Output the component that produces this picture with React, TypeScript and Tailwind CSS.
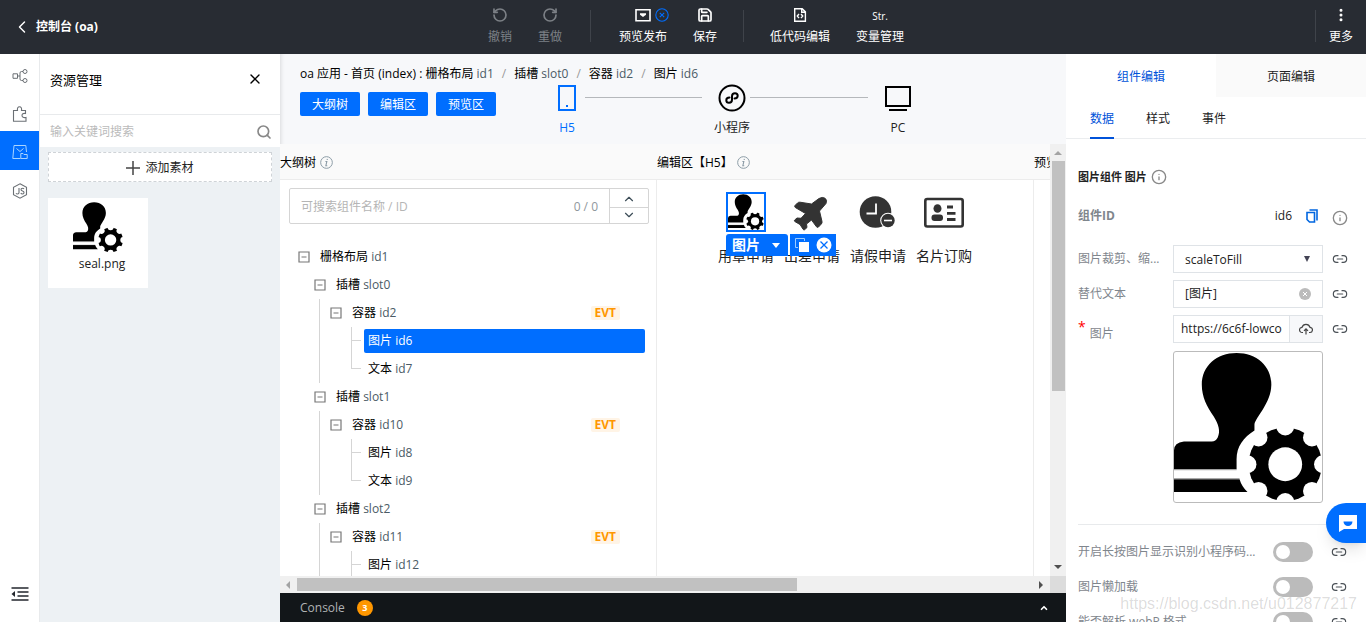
import React, { useState } from 'react';
import { ChevronDown, ChevronLeft, ChevronUp, EllipsisVertical, Info, Link2, RotateCcw, RotateCw, Save, Search, X } from 'lucide-react';

interface TreeItem {
  name: string;
  id: string;
  evt?: boolean;
  children?: TreeItem[];
}

const slots: TreeItem[] = [
  {
    name: '插槽',
    id: 'slot0',
    children: [{ name: '容器', id: 'id2', evt: true, children: [{ name: '图片', id: 'id6' }, { name: '文本', id: 'id7' }] }],
  },
  {
    name: '插槽',
    id: 'slot1',
    children: [{ name: '容器', id: 'id10', evt: true, children: [{ name: '图片', id: 'id8' }, { name: '文本', id: 'id9' }] }],
  },
  {
    name: '插槽',
    id: 'slot2',
    children: [{ name: '容器', id: 'id11', evt: true, children: [{ name: '图片', id: 'id12' }, { name: '文本', id: 'id13' }] }],
  },
];

const notches = [0, 45, 90, 135, 180, 225, 270, 315];

const SealImage: React.FC<{ className: string }> = ({ className }) => (
  <svg viewBox="0 0 149 149" className={className} role="img" aria-label="seal">
    <circle cx="112" cy="113" r="37" />
    {notches.map((deg) => (
      <circle key={deg} cx="150" cy="113" r="9" fill="#fff" transform={`rotate(${deg} 112 113)`} />
    ))}
    <circle cx="112" cy="113" r="17" fill="#fff" />
    <path d="M63 1C43 1 28 14 28 33C28 45 33 55 40 65C45 73 47 80 44 86Q42 90 38 90H10Q0 91 0 99V118H63V108C63 95 70 86 81 79V73C82 66 98 51 98 33C98 14 83 1 63 1Z" />
    <path d="M0 128H66Q68 135 74 141H0Z" />
    <path d="M0 118.500H63M0 127.500H66" stroke="#999" />
  </svg>
);

const HintIcon = () => (
  <svg viewBox="0 0 12 12" className="size-[13px] shrink-0" fill="none" stroke="#8a9aa5">
    <circle cx="6" cy="6" r="5.4" strokeWidth="0.9" />
    <path d="M6.8 2.7l-.2 1M5 5.1h1.3L5.4 9h1.3" strokeWidth="1" />
  </svg>
);

const CollapseIcon = () => (
  <svg viewBox="0 0 12 12" className="size-3 shrink-0" fill="none" stroke="#777">
    <path d="M1 1h10v10H1zM3.5 6h5" strokeWidth="1.2" />
  </svg>
);

const PreviewIcon = () => (
  <svg viewBox="0 0 16 16" className="size-4" fill="none" stroke="#fff">
    <path d="M1 2.7h14v11H1z" strokeWidth="1.6" />
    <path d="M5 6.2h6v1.500L8 10 5 7.700z" fill="#fff" stroke="none" />
  </svg>
);

const CodeFileIcon = () => (
  <svg viewBox="0 0 16 16" className="size-4" fill="none" stroke="#fff" strokeWidth="1.4">
    <path d="M2.7 1.7h7.5l3.2 3.2v9.4H2.7zM9.7 2v3.3h3.5M7 7L5.3 9 7 11M9 7l1.7 2L9 11" />
  </svg>
);

interface ToolProps {
  label: string;
  muted?: boolean;
  children: React.ReactNode;
}

const Tool: React.FC<ToolProps> = ({ label, muted, children }) => (
  <button type="button" className={`flex shrink-0 flex-col items-center gap-[6px] whitespace-nowrap leading-4 ${muted ? 'text-[#7c8086]' : 'text-white'}`}>
    <span className="relative flex h-4 items-center">{children}</span>
    {label}
  </button>
);

const Header = () => (
  <header className="flex h-[54px] shrink-0 items-start bg-[#282c33] pr-[13px] text-white">
    <button type="button" className="flex h-[54px] w-[488px] shrink-0 items-center gap-1 pl-3 font-bold">
      <ChevronLeft className="size-5" strokeWidth={1.75} />
      控制台 (oa)
    </button>
    <nav className="flex gap-[26px] pt-[7px]">
      <Tool label="撤销" muted><RotateCcw className="size-4" strokeWidth={2.5} /></Tool>
      <Tool label="重做" muted><RotateCw className="size-4" strokeWidth={2.5} /></Tool>
      <span className="mx-[2px] mt-[3px] h-8 w-px bg-[#3f434a]" />
      <Tool label="预览发布">
        <PreviewIcon />
        <svg viewBox="0 0 14 14" className="absolute left-5 top-px size-[14px]" fill="none" stroke="#006eff" strokeWidth="1.1">
          <circle cx="7" cy="7" r="6.2" />
          <path d="M4.8 4.8l4.4 4.4M9.2 4.8L4.8 9.2" />
        </svg>
      </Tool>
      <Tool label="保存"><Save className="size-4" strokeWidth={2.5} /></Tool>
      <span className="mt-[3px] h-8 w-px bg-[#3f434a]" />
      <Tool label="低代码编辑"><CodeFileIcon /></Tool>
      <Tool label="变量管理"><span className="pt-[2px] text-[10px]">Str.</span></Tool>
    </nav>
    <div className="ml-auto flex gap-[13px] pt-[7px]">
      <span className="mt-[3px] h-8 w-px bg-[#3f434a]" />
      <Tool label="更多"><EllipsisVertical className="size-4" strokeWidth={2.5} /></Tool>
    </div>
  </header>
);

const Rail = () => (
  <nav className="flex w-10 shrink-0 flex-col border-r border-[#e8eaec] bg-white pt-px text-[#6b7075]">
    <button type="button" aria-label="流程" className="flex h-[38px] items-center justify-center pt-[3px]">
      <svg viewBox="0 0 16 16" className="size-4" fill="none" stroke="currentColor">
        <path d="M1 5.8h4.5v4.5H1zM5.5 8H8M11 3.5H9.5Q8 3.5 8 5v6q0 1.500 1.500 1.500H11" />
        <circle cx="13" cy="3.5" r="2" />
        <circle cx="13" cy="12.500" r="2" />
      </svg>
    </button>
    <button type="button" aria-label="组件" className="flex h-[38px] items-center justify-center pt-[3px]">
      <svg viewBox="0 0 16 16" className="size-4" fill="none" stroke="currentColor" strokeWidth="1.1">
        <path d="M1.500 4.500H5.500C5 2 6 .8 7.500 .8S10 2 9.500 4.500H13.500V7.500C11 7 10 8 10 9.500S11.500 12 14 11.500V15.300H1.500Z" />
      </svg>
    </button>
    <button type="button" aria-label="资源" className="flex h-[39px] items-center justify-center bg-[#006eff] pt-[3px] text-[#a9d4ff]">
      <svg viewBox="0 0 16 16" className="size-4" fill="none" stroke="currentColor">
        <path d="M8.500 14.500H.8L2 1.500H13.800L14.500 8M4.500 4.500L8 7.500 11.500 4.500M8.800 9.500H11L12 10.500H15.200V14.500H8.800Z" />
      </svg>
    </button>
    <button type="button" aria-label="脚本" className="flex h-[38px] items-center justify-center pt-[3px]">
      <svg viewBox="0 0 16 16" className="size-4" fill="none" stroke="currentColor" strokeWidth="1.1">
        <path d="M8 .8L14.500 4.300V11.700L8 15.200 1.500 11.700V4.300Z" />
        <path d="M7 5V9.500Q7 11 5.500 11 4.500 11 4 10.200M12 6Q11.500 5.200 10.500 5.200 9 5.200 9 6.500 9 7.600 10.500 8 12 8.400 12 9.600 12 11 10.500 11 9.300 11 8.800 10" />
      </svg>
    </button>
    <button type="button" aria-label="收起" className="mt-auto mb-2 flex h-10 items-center justify-center text-[#23272e]">
      <svg viewBox="0 0 18 14" className="h-[14px] w-[18px]" fill="none" stroke="currentColor" strokeWidth="1.5">
        <path d="M.5 1H17.500M6.500 5H17.500M6.500 9H17.500M.5 13H17.500" />
        <path d="M4 4v6L.5 7z" fill="currentColor" stroke="none" />
      </svg>
    </button>
  </nav>
);

const Resources = () => (
  <aside className="flex w-60 shrink-0 flex-col bg-[#edf1f4]">
    <div className="flex h-[61px] items-start justify-between border-b border-[#e8eaec] bg-white px-[10px] pt-4">
      <h2 className="text-[13px] leading-5 text-black">资源管理</h2>
      <button type="button" aria-label="关闭" className="px-[7px] pt-[1px] text-black"><X className="size-4" /></button>
    </div>
    <div className="flex h-8 items-center bg-white pl-[10px] pr-2 pt-[2px]">
      <input aria-label="搜索素材" placeholder="输入关键词搜索" className="min-w-0 flex-1 outline-none placeholder:text-[#bbb]" />
      <Search className="size-4 text-[#888]" strokeWidth={2.5} />
    </div>
    <button type="button" className="mx-2 mt-[5px] flex h-[30px] items-center justify-center gap-[5px] border border-dashed border-[#cfd3d7] bg-white pt-[2px]">
      <svg viewBox="0 0 14 14" className="size-[14px]" stroke="#444" strokeWidth="1.5"><path d="M7 0v14M0 7h14" /></svg>
      添加素材
    </button>
    <figure className="ml-2 mt-4 flex h-[90px] w-[100px] flex-col items-center bg-white pt-1">
      <SealImage className="size-[50px]" />
      <figcaption className="mt-1 pl-2 leading-4">seal.png</figcaption>
    </figure>
  </aside>
);

const crumbs = [
  ['插槽', 'slot0'],
  ['容器', 'id2'],
  ['图片', 'id6'],
];

const Devices = () => (
  <div className="ml-[53px] flex items-start leading-4">
    <button type="button" className="flex w-9 flex-col items-center gap-2 text-[#006eff]">
      <svg viewBox="0 0 18 28" className="h-7 w-[18px]" fill="none" stroke="currentColor" strokeWidth="2">
        <path d="M1 2h16v24H1zM8 22h2" />
      </svg>
      H5
    </button>
    <span className="mr-3 mt-[13px] h-px w-[117px] bg-[#b5b8bb]" />
    <button type="button" className="flex w-9 flex-col items-center gap-2 whitespace-nowrap">
      <svg viewBox="0 0 28 28" className="size-7" fill="none" stroke="#000" strokeWidth="2">
        <circle cx="14" cy="14" r="12.500" />
        <path d="M11.500 13.500C9.500 13.500 8.300 14.700 8.300 16.200S9.500 18.800 11 18.800 14 17.800 14 15.800V12.200C14 10.200 15.500 9.200 17 9.200S19.700 10.300 19.700 11.800 18.500 14.500 16.500 14.500" strokeLinecap="round" />
      </svg>
      小程序
    </button>
    <span className="mr-3 mt-[13px] h-px w-[118px] bg-[#b5b8bb]" />
    <button type="button" className="flex w-9 flex-col items-center gap-2">
      <svg viewBox="0 0 26 28" className="h-7 w-[26px]" fill="none" stroke="#000" strokeWidth="2">
        <path d="M1 3h24v19H1zM4 26h18" />
      </svg>
      PC
    </button>
  </div>
);

const Label: React.FC<{ item: TreeItem }> = ({ item }) => (
  <span className="whitespace-nowrap text-black">
    {item.name} <span className="text-[#4b5b66]">{item.id}</span>
  </span>
);

const Leaf: React.FC<{ item: TreeItem; last: boolean; selected: boolean; onSelect: () => void }> = ({ item, last, selected, onSelect }) => (
  <li className="flex h-7 items-center gap-[3px]">
    <span className="flex h-7 w-[10px] shrink-0 flex-col">
      <span className="h-[14px] border-b border-l border-[#d5d5d5]" />
      <span className={`h-[14px] ${last ? '' : 'border-l border-[#d5d5d5]'}`} />
    </span>
    <button
      type="button"
      onClick={onSelect}
      className={`mr-[11px] h-6 flex-1 rounded-[2px] px-1 text-left ${selected ? 'bg-[#006eff] text-white' : 'text-black'}`}
    >
      {item.name} <span className={selected ? 'text-white' : 'text-[#4b5b66]'}>{item.id}</span>
    </button>
  </li>
);

const Outline = () => {
  const [selectedId, setSelectedId] = useState('id6');

  return (
    <section className="flex w-[377px] shrink-0 flex-col">
      <h3 className="flex h-9 shrink-0 items-center gap-1 border-b border-[#ececec] bg-[#fafafa] pt-[2px] text-black">
        大纲树 <HintIcon />
      </h3>
      <div className="flex min-h-0 flex-1 flex-col border-r border-[#ececec] bg-white pt-2">
        <div className="ml-[9px] mr-[7px] flex h-9 shrink-0 rounded-[2px] border border-[#d5d5d5]">
          <input aria-label="搜索组件" placeholder="可搜索组件名称 / ID" className="min-w-0 flex-1 px-[11px] pt-[2px] outline-none placeholder:text-[#b5b5b5]" />
          <span className="flex items-center pr-[11px] pt-[2px] text-[#8f979d]">0 / 0</span>
          <div className="flex w-[39px] flex-col border-l border-[#d5d5d5] text-[#3d4d58]">
            <button type="button" aria-label="上一个" className="flex flex-1 items-center justify-center border-b border-[#d5d5d5] pt-[2px]"><ChevronUp className="size-[14px]" /></button>
            <button type="button" aria-label="下一个" className="flex flex-1 items-center justify-center"><ChevronDown className="size-[14px]" /></button>
          </div>
        </div>
        <div className="mt-[19px] min-h-0 flex-1 overflow-hidden pl-[18px]">
          <div className="flex h-7 items-center gap-[10px]">
            <CollapseIcon />
            <Label item={{ name: '栅格布局', id: 'id1' }} />
          </div>
          <ul className="pl-4">
            {slots.map((slot) => (
              <li key={slot.id}>
                <div className="flex h-7 items-center gap-[10px]">
                  <CollapseIcon />
                  <Label item={slot} />
                </div>
                {slot.children?.map((box) => (
                  <div key={box.id} className="ml-[5px] border-l border-[#d5d5d5] pl-[10px]">
                    <div className="flex h-7 items-center gap-[10px] pr-9">
                      <CollapseIcon />
                      <Label item={box} />
                      {box.evt && <span className="ml-auto rounded-[2px] bg-[#fff4e6] px-1 font-bold leading-[14px] text-[#ff9700]">EVT</span>}
                    </div>
                    <ul className="pl-[21px]">
                      {box.children?.map((leaf, i, all) => (
                        <Leaf
                          key={leaf.id}
                          item={leaf}
                          last={i === all.length - 1}
                          selected={selectedId === leaf.id}
                          onSelect={() => setSelectedId(leaf.id)}
                        />
                      ))}
                    </ul>
                  </div>
                ))}
              </li>
            ))}
          </ul>
        </div>
      </div>
    </section>
  );
};

const EditArea = () => (
  <section className="flex w-[377px] shrink-0 flex-col">
    <h3 className="flex h-9 shrink-0 items-center gap-1 border-b border-[#ececec] bg-[#fafafa] pt-[2px] text-black">
      编辑区【H5】 <HintIcon />
    </h3>
    <div className="flex-1 border-r border-[#ececec] bg-white pl-14 pt-3">
      <div className="grid w-[264px] grid-cols-4 text-sm text-[#222]">
        <div className="relative flex flex-col items-center">
          <div className="size-10 border-2 border-[#006eff] bg-white"><SealImage className="size-9" /></div>
          <span className="mt-[14px] whitespace-nowrap leading-5">用章申请</span>
          <div className="absolute left-[13px] top-[42px] flex gap-[2px] text-white">
            <button type="button" className="flex h-[22px] w-[62px] items-center justify-between rounded-t-[3px] bg-[#006eff] pl-[6px] pr-2 font-bold">
              图片
              <svg viewBox="0 0 8 5" className="h-[5px] w-2" fill="#fff"><path d="M0 0h8L4 5z" /></svg>
            </button>
            <span className="flex h-[22px] w-[46px] items-center justify-between bg-[#006eff] pl-[5px] pr-1">
              <button type="button" aria-label="复制">
                <svg viewBox="0 0 14 14" className="size-[14px]"><path d="M.5 9.500V.5h9" fill="none" stroke="#9ccbff" /><path d="M4 4h10v10H4z" fill="#fff" /><path d="M.5 9.500H3M9.500 .5V3" stroke="#9ccbff" /></svg>
              </button>
              <button type="button" aria-label="删除">
                <svg viewBox="0 0 16 16" className="size-4"><circle cx="8" cy="8" r="7.500" fill="#fff" /><path d="M4.500 4.500l7 7M11.500 4.500l-7 7" stroke="#006eff" strokeWidth="1.300" /></svg>
              </button>
            </span>
          </div>
        </div>
        <div className="flex flex-col items-center">
          <svg viewBox="0 0 40 40" className="size-10" fill="#333">
            <path d="M3 13.500L5.500 11Q6.500 10 8 10.200L19.500 12 27 6.500Q30.500 4.500 33 6.200T34 11.500L27.500 19 30 29.500Q30.300 31 29.300 32L26.500 35Q25.300 36 24.500 34.800L19.500 28 14.500 32 15 35.500 12.500 37.800Q11.800 38.200 11.200 37.400L8 32.500 2.800 29.500Q2 28.800 2.700 28L5 26 9 26.300 13.500 21.500 3.300 15.500Q2.200 14.500 3 13.500Z" stroke="#333" strokeLinejoin="round" />
          </svg>
          <span className="mt-[14px] whitespace-nowrap leading-5">出差申请</span>
        </div>
        <div className="flex flex-col items-center">
          <svg viewBox="0 0 40 40" className="size-10">
            <circle cx="17.500" cy="20" r="15.800" fill="#333" />
            <path d="M18 11.500V21.500H8.500" fill="none" stroke="#fff" strokeWidth="1.800" />
            <circle cx="30" cy="28.500" r="7.800" fill="#fff" />
            <circle cx="30" cy="28.500" r="6.700" fill="#333" />
            <path d="M26 28.500h8" stroke="#fff" strokeWidth="1.600" />
          </svg>
          <span className="mt-[14px] whitespace-nowrap leading-5">请假申请</span>
        </div>
        <div className="flex flex-col items-center">
          <svg viewBox="0 0 40 40" className="size-10" fill="#333">
            <rect x="1.300" y="7" width="37.400" height="27.500" rx="2" fill="none" stroke="#333" strokeWidth="2.600" />
            <ellipse cx="13.500" cy="16.500" rx="4" ry="4.300" />
            <rect x="7.500" y="22.500" width="11.500" height="6.500" rx="3" />
            <path d="M23 15h6M23 21.300h8.500M23 27.500h8.500" stroke="#333" strokeWidth="2.800" />
          </svg>
          <span className="mt-[14px] whitespace-nowrap leading-5">名片订购</span>
        </div>
      </div>
    </div>
  </section>
);

const Arrow: React.FC<{ d: string; color: string }> = ({ d, color }) => (
  <svg viewBox="0 0 8 8" className="size-2 shrink-0" fill={color}><path d={d} /></svg>
);

const Workspace = () => (
  <main className="flex min-w-0 flex-1 flex-col bg-[#f7f8fa] shadow-[inset_4px_0_4px_-3px_rgba(0,0,0,0.12)]">
    <div className="h-[90px] shrink-0 overflow-hidden pl-5 pt-3">
      <div className="flex gap-2 whitespace-nowrap leading-4 text-black">
        <span>oa 应用 - 首页 (index) : 栅格布局 <span className="text-[#4b5b66]">id1</span></span>
        {crumbs.map(([name, id]) => (
          <span key={id} className="flex gap-2">
            <span className="text-[#999]">/</span>
            <span>{name} <span className="text-[#4b5b66]">{id}</span></span>
          </span>
        ))}
      </div>
      <div className="mt-[2px] flex items-start">
        <div className="mt-2 flex gap-2 text-white">
          <button type="button" className="h-6 w-[60px] rounded-[2px] bg-[#006eff] pt-[2px]">大纲树</button>
          <button type="button" className="h-6 w-[60px] rounded-[2px] bg-[#006eff] pt-[2px]">编辑区</button>
          <button type="button" className="h-6 w-[60px] rounded-[2px] bg-[#006eff] pt-[2px]">预览区</button>
        </div>
        <Devices />
      </div>
    </div>
    <div className="flex min-h-0 flex-1">
      <div className="flex min-w-0 flex-1 overflow-hidden">
        <Outline />
        <EditArea />
        <section className="flex w-[377px] shrink-0 flex-col">
          <h3 className="flex h-9 shrink-0 items-center border-b border-[#ececec] bg-[#fafafa] pt-[2px] text-black">预览区</h3>
          <div className="flex-1 bg-white" />
        </section>
      </div>
      <div className="flex w-4 shrink-0 flex-col items-center bg-[#f0f0f0] py-[5px]">
        <Arrow d="M0 6h8L4 2z" color="#a3a3a3" />
        <span className="mt-1 h-[230px] w-[13px] bg-[#c1c1c1]" />
        <span className="mt-auto flex"><Arrow d="M0 2h8L4 6z" color="#505050" /></span>
      </div>
    </div>
    <div className="flex h-[17px] shrink-0 bg-[#dcdcdc]">
      <div className="flex min-w-0 flex-1 items-center bg-[#f0f0f0] px-[5px]">
        <Arrow d="M5 0v8L1 4z" color="#a3a3a3" />
        <span className="ml-1 h-[13px] w-[500px] bg-[#c1c1c1]" />
        <span className="ml-auto flex"><Arrow d="M2 0v8l4-4z" color="#505050" /></span>
      </div>
      <span className="w-4" />
    </div>
    <footer className="flex h-[29px] shrink-0 items-center bg-[#121619] pl-5 pr-[17px] pt-px font-medium text-[#b0b2b4]">
      Console
      <span className="ml-3 flex size-4 items-center justify-center rounded-full bg-[#ff9700] text-[9px] font-bold text-white">3</span>
      <button type="button" aria-label="展开" className="ml-auto text-white"><ChevronUp className="size-[10px]" strokeWidth={4} /></button>
    </footer>
  </main>
);

const LinkButton = () => (
  <button type="button" aria-label="绑定" className="text-[#4b5157]"><Link2 className="size-4" strokeWidth={1.75} /></button>
);

const switches = ['开启长按图片显示识别小程序码...', '图片懒加载', '能否解析 webP 格式'];

const Properties = () => {
  const [checked, setChecked] = useState<Record<string, boolean>>({});
  const [alt, setAlt] = useState('[图片]');

  return (
    <aside className="relative flex w-[300px] shrink-0 flex-col overflow-hidden bg-white">
      <div className="flex h-[43px] shrink-0">
        <button type="button" className="flex-1 pt-[3px] text-[#0052d9]">组件编辑</button>
        <button type="button" className="flex-1 bg-[#fafafa] pt-[3px]">页面编辑</button>
      </div>
      <div className="flex h-[42px] shrink-0 gap-8 border-b border-[#ebedef] px-6">
        <button type="button" className="h-[42px] border-b-2 border-[#0052d9] pt-[3px] text-[#0052d9]">数据</button>
        <button type="button" className="h-[42px] border-b-2 border-transparent pt-[3px]">样式</button>
        <button type="button" className="h-[42px] border-b-2 border-transparent pt-[3px]">事件</button>
      </div>
      <div className="flex flex-col px-3 pt-[30px]">
        <h3 className="flex h-4 items-center gap-1 text-[11px] font-bold">图片组件 图片 <Info className="size-4 text-[#888]" /></h3>
        <div className="mt-[23px] flex h-4 items-center pr-[6px]">
          <span className="flex-1 font-bold text-[#7f868d]">组件ID</span>
          id6
          <button type="button" aria-label="复制ID" className="ml-[14px]">
            <svg viewBox="0 0 12 14" className="h-[14px] w-3" fill="none" stroke="#0066e0" strokeWidth="1.600"><path d="M1 3.500h7.500V13H3.500L1 10.500ZM3.500 1H11v10.500" /></svg>
          </button>
          <Info className="ml-[14px] mt-[3px] size-4 text-[#888]" />
        </div>
        <div className="mt-[21px] flex flex-col gap-[7px]">
          <div className="flex h-7 items-center pr-[6px]">
            <label htmlFor="mode" className="w-[95px] text-[#7f868d]">图片裁剪、缩...</label>
            <span className="relative mr-[9px] flex-1">
              <select id="mode" className="block h-7 w-full appearance-none border border-[#dfe3e7] bg-white pl-[11px] pt-[2px] outline-none">
                <option>scaleToFill</option>
                <option>aspectFit</option>
              </select>
              <svg viewBox="0 0 6 6" className="pointer-events-none absolute right-[13px] top-[11px] size-[6px]" fill="#445"><path d="M0 0h6L3 6z" /></svg>
            </span>
            <LinkButton />
          </div>
          <div className="flex h-7 items-center pr-[6px]">
            <label htmlFor="alt" className="w-[95px] text-[#7f868d]">替代文本</label>
            <span className="mr-[9px] flex h-7 min-w-0 flex-1 items-center border border-[#dfe3e7] pr-[11px]">
              <input id="alt" value={alt} onChange={(e) => setAlt(e.target.value)} className="min-w-0 flex-1 pl-[11px] outline-none" />
              <button type="button" aria-label="清除" onClick={() => setAlt('')}>
                <svg viewBox="0 0 12 12" className="size-3"><circle cx="6" cy="6" r="6" fill="#bbb" /><path d="M4 4l4 4M8 4L4 8" stroke="#fff" /></svg>
              </button>
            </span>
            <LinkButton />
          </div>
          <div className="flex h-7 items-center pr-[6px]">
            <label htmlFor="src" className="flex h-7 w-[95px] items-end gap-1 pb-px text-[#7f868d]">
              <span className="self-start text-sm leading-6 text-[#f00]">*</span>
              图片
            </label>
            <span className="mr-[9px] flex h-7 min-w-0 flex-1 items-center border border-[#dfe3e7]">
              <input id="src" defaultValue="https://6c6f-lowcode" className="mx-[7px] min-w-0 flex-1 outline-none" />
              <button type="button" aria-label="上传" className="flex h-[26px] w-[33px] items-center justify-center border-l border-[#dfe3e7] bg-[#f7f8fa]">
                <svg viewBox="0 0 14 12" className="h-3 w-[14px]" fill="none" stroke="#444" strokeWidth="1.200"><path d="M4 9.500H3.300A2.600 2.600 0 0 1 3 4.300 4.200 4.200 0 0 1 11 4.300 2.600 2.600 0 0 1 10.700 9.500H10M7 11.500V6M5 7.800L7 5.800 9 7.800" /></svg>
              </button>
            </span>
            <LinkButton />
          </div>
        </div>
        <div className="ml-[95px] mt-2 h-[152px] w-[150px] rounded-[3px] border border-[#bbb]">
          <SealImage className="size-[148px]" />
        </div>
        <div className="mt-[21px] flex flex-col gap-[7px] border-t border-[#e8eaec] pt-[13px]">
          {switches.map((name) => (
            <label key={name} className="flex h-7 items-center whitespace-nowrap pr-[7px] text-[#7f868d]">
              <span className="flex-1">{name}</span>
              <input
                type="checkbox"
                role="switch"
                checked={!!checked[name]}
                onChange={(e) => setChecked({ ...checked, [name]: e.target.checked })}
                className="mr-[18px] flex h-5 w-10 appearance-none items-center rounded-full bg-[#bbb] px-[3px] before:size-[14px] before:rounded-full before:bg-white checked:bg-[#006eff] checked:before:ml-5"
              />
              <LinkButton />
            </label>
          ))}
        </div>
      </div>
      <button type="button" aria-label="客服" className="absolute right-0 top-[449px] flex h-10 w-10 items-center rounded-l-full bg-[#006eff] pl-[13px] shadow-lg">
        <svg viewBox="0 0 18 17" className="h-[17px] w-[18px]"><path d="M0 0h18v14H5L0 17z" fill="#fff" /><path d="M4.500 6.500h9a4.500 4.500 0 0 1-9 0z" fill="#006eff" /></svg>
      </button>
      <span className="pointer-events-none absolute bottom-2 right-[9px] font-['Liberation_Sans'] text-base leading-5 text-black/15">https://blog.csdn.net/u012877217</span>
    </aside>
  );
};

const App = () => (
  <div className="flex h-screen flex-col overflow-hidden bg-white font-['Open_Sans','Noto_Sans_CJK_SC',sans-serif] text-xs text-[#222]">
    <Header />
    <div className="flex min-h-0 flex-1">
      <Rail />
      <Resources />
      <Workspace />
      <Properties />
    </div>
  </div>
);

export default App;
